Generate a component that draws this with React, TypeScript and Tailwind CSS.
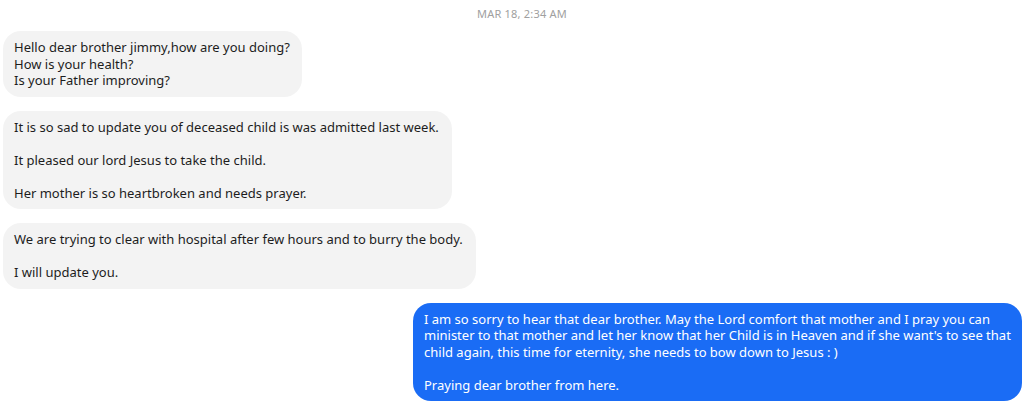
import React from "react";

export default function App() {
  const font = { fontFamily: '"Segoe UI", "Noto Sans", "Open Sans", sans-serif' };
  return (
    <div className="w-[1024px] h-[401px] overflow-hidden bg-white flex flex-col" style={font}>
      <div className="h-[32px] flex justify-center pl-[20px] pt-[6px] text-[11px] text-[#a0a0a0] tracking-[0.2px]">
        MAR 18, 2:34 AM
      </div>
      <div className="flex flex-col gap-[14px] px-[3px] text-[13px] leading-[16.5px] text-[#1d1d1d]">
        <div className="w-[299px] rounded-[18px] bg-[#f3f3f3] px-[11px] py-[8px]">
          Hello dear brother jimmy,how are you doing?
          <br />
          How is your health?
          <br />
          Is your Father improving?
        </div>
        <div className="w-[449px] rounded-[18px] bg-[#f3f3f3] px-[11px] py-[8px]">
          <p>It is so sad to update you of deceased child is was admitted last week.</p>
          <p className="mt-[16.5px]">It pleased our lord Jesus to take the child.</p>
          <p className="mt-[16.5px]">Her mother is so heartbroken and needs prayer.</p>
        </div>
        <div className="w-[473px] rounded-[18px] bg-[#f3f3f3] px-[11px] py-[8px]">
          <p>We are trying to clear with hospital after few hours and to burry the body.</p>
          <p className="mt-[16.5px]">I will update you.</p>
        </div>
        <div className="self-end mr-[-1px] w-[609px] rounded-[18px] bg-[#1a6cf5] px-[11px] py-[8px] text-white">
          <p>
            I am so sorry to hear that dear brother. May the Lord comfort that mother and I pray you can
            <br />
            minister to that mother and let her know that her Child is in Heaven and if she want's to see that
            <br />
            child again, this time for eternity, she needs to bow down to Jesus : )
          </p>
          <p className="mt-[16.5px]">Praying dear brother from here.</p>
        </div>
      </div>
    </div>
  );
}
